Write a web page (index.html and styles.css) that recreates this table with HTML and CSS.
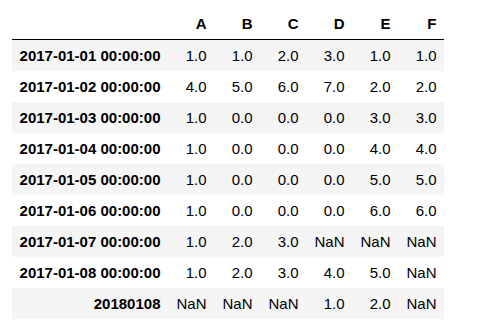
FILE: index.html
```html
<!DOCTYPE html>
<html>
<head>
<meta charset="utf-8">
<link rel="stylesheet" href="styles.css">
</head>
<body>
<div class="output">
<table class="dataframe">
  <colgroup>
    <col class="c-index">
    <col class="c-val"><col class="c-val"><col class="c-val"><col class="c-val"><col class="c-val"><col class="c-val">
  </colgroup>
  <thead>
    <tr><th></th><th>A</th><th>B</th><th>C</th><th>D</th><th>E</th><th>F</th></tr>
  </thead>
  <tbody>
    <tr><th>2017-01-01 00:00:00</th><td>1.0</td><td>1.0</td><td>2.0</td><td>3.0</td><td>1.0</td><td>1.0</td></tr>
    <tr><th>2017-01-02 00:00:00</th><td>4.0</td><td>5.0</td><td>6.0</td><td>7.0</td><td>2.0</td><td>2.0</td></tr>
    <tr><th>2017-01-03 00:00:00</th><td>1.0</td><td>0.0</td><td>0.0</td><td>0.0</td><td>3.0</td><td>3.0</td></tr>
    <tr><th>2017-01-04 00:00:00</th><td>1.0</td><td>0.0</td><td>0.0</td><td>0.0</td><td>4.0</td><td>4.0</td></tr>
    <tr><th>2017-01-05 00:00:00</th><td>1.0</td><td>0.0</td><td>0.0</td><td>0.0</td><td>5.0</td><td>5.0</td></tr>
    <tr><th>2017-01-06 00:00:00</th><td>1.0</td><td>0.0</td><td>0.0</td><td>0.0</td><td>6.0</td><td>6.0</td></tr>
    <tr><th>2017-01-07 00:00:00</th><td>1.0</td><td>2.0</td><td>3.0</td><td>NaN</td><td>NaN</td><td>NaN</td></tr>
    <tr><th>2017-01-08 00:00:00</th><td>1.0</td><td>2.0</td><td>3.0</td><td>4.0</td><td>5.0</td><td>NaN</td></tr>
    <tr><th>20180108</th><td>NaN</td><td>NaN</td><td>NaN</td><td>1.0</td><td>2.0</td><td>NaN</td></tr>
  </tbody>
</table>
</div>
</body>
</html>
```
FILE: styles.css
```css
html, body {
  margin: 0;
  background: #ffffff;
}
.output {
  padding: 8px 0 0 12px;
}
.dataframe {
  border-collapse: separate;
  border-spacing: 0;
  table-layout: fixed;
  width: 432px;
  font-family: "Liberation Sans", Arial, sans-serif;
  font-size: 15px;
  color: #000;
}
.c-index { width: 156px; }
.c-val { width: 46px; }
.dataframe th,
.dataframe td {
  padding: 0 7.5px;
  line-height: 31px;
  text-align: right;
  white-space: nowrap;
  vertical-align: middle;
}
.dataframe th { font-weight: bold; }
.dataframe td { font-weight: normal; }
.dataframe thead th {
  border-bottom: 1px solid #000;
}
.dataframe tbody tr:nth-child(odd) {
  background: #f5f5f5;
}
```
